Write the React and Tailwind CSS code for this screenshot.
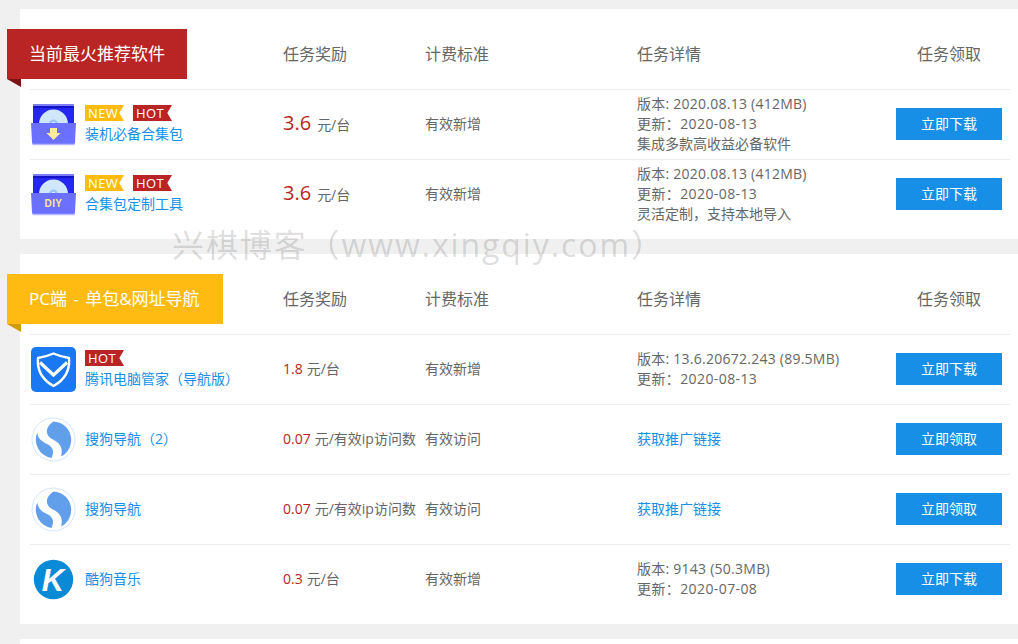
const FONT = "[font-family:'Open_Sans','Noto_Sans_CJK_SC',sans-serif]";

function BoxIcon({ diy }) {
  return (
    <svg width="45" height="45" viewBox="0 0 45 45" className="block">
      <rect x="2" y="2" width="41" height="26" rx="1.5" fill="#2626f2" />
      <rect x="2" y="2" width="41" height="2" fill="#7d7dfa" />
      <rect x="2" y="4" width="41" height="2" fill="#1212c8" />
      <circle cx="22.5" cy="22" r="14.5" fill="#cfe6fb" />
      <circle cx="22.5" cy="22" r="4.5" fill="#9cc8ef" />
      <circle cx="22.5" cy="22" r="2" fill="#e8f4fd" />
      <path d="M0 21H45L44 40Q44 43 41 43H4Q1 43 1 40Z" fill="#6c70ff" />
      <path d="M1.5 42.5H43.5" stroke="#b6b8ff" strokeWidth="1.5" />
      {diy ? (
        <text x="22.5" y="35" textAnchor="middle" fontSize="10" fontWeight="700" fill="#ffe98a" fontFamily="Liberation Sans, sans-serif" letterSpacing="0.4">DIY</text>
      ) : (
        <path d="M19 26H26V31H29.5L22.5 38L15.5 31H19Z" fill="#ffeb9c" />
      )}
    </svg>
  );
}

function ShieldIcon() {
  return (
    <svg width="45" height="45" viewBox="0 0 45 45" className="block">
      <rect width="45" height="45" rx="5" fill="#1a78f2" />
      <path d="M22.5 6.5C27 8.5 32 10 38 11C39 22 35 32 22.5 39C10 32 6 22 7 11C13 10 18 8.5 22.5 6.5Z" fill="none" stroke="#fff" strokeWidth="2.4" strokeLinejoin="round" />
      <path d="M9 15.5L22.5 28L36 15.5" fill="none" stroke="#fff" strokeWidth="3.2" strokeLinejoin="miter" />
    </svg>
  );
}

function SogouIcon() {
  return (
    <svg width="45" height="45" viewBox="0 0 45 45" className="block">
      <circle cx="22.5" cy="22.5" r="21.5" fill="#fff" stroke="#d5e6fa" strokeWidth="1" />
      <path d="M22.5 4.5A18.5 18.5 0 0 1 30 39.5C32.5 31 29 26 22 22.5C14 19 13.5 10 22.5 4.5Z" fill="#619fea" />
      <path d="M6.5 15A18.5 18.5 0 0 0 20.5 41C23.5 34 22 30 16 27C10 24.5 6 20 6.5 15Z" fill="#619fea" />
    </svg>
  );
}

function KugouIcon() {
  return (
    <svg width="45" height="45" viewBox="0 0 45 45" className="block">
      <circle cx="22.5" cy="22.5" r="19.7" fill="#0a8ad6" />
      <text x="22" y="33.5" textAnchor="middle" fontSize="31" fontWeight="700" fontStyle="italic" fill="#fff" fontFamily="Liberation Sans, sans-serif">K</text>
    </svg>
  );
}

function Tag({ children, color }) {
  return (
    <span className={`flex h-[16px] w-[39px] items-center pl-[3px] text-[13px] leading-[16px] tracking-[0.4px] text-white [clip-path:polygon(0_0,100%_0,88%_50%,100%_100%,0_100%)] ${color}`}>
      {children}
    </span>
  );
}

function Header({ title, flagColor, foldColor, flagWidth }) {
  return (
    <div className="flex h-[80px] items-center pt-[10px] text-[16px] leading-[22px] text-[#666666]">
      <div className="w-[253px]">
        <div className={`relative -ml-[23px] flex h-[50px] items-center whitespace-pre pl-[22px] text-[17px] text-white [word-spacing:2px] ${flagColor} ${flagWidth}`}>
          {title}
          <span className={`absolute left-0 top-full h-[8px] w-[14px] [clip-path:polygon(0_0,100%_0,100%_100%)] ${foldColor}`} />
        </div>
      </div>
      <div className="w-[142px]">任务奖励</div>
      <div className="w-[212px]">计费标准</div>
      <div className="w-[259px]">任务详情</div>
      <div className="w-[106px] text-center">任务领取</div>
    </div>
  );
}

function Row({ icon, tags, name, price, big, unit, standard, detail, link, button }) {
  return (
    <div className="flex h-[70px] items-center border-t border-[#eeeeee] pb-px text-[14px] leading-[20px] text-[#666666]">
      <div className="mt-px w-[55px] pl-[1px]">{icon}</div>
      <div className={tags ? "w-[198px] pt-px" : "w-[198px]"}>
        {tags && <div className="mb-[3px] flex gap-[9px]">{tags}</div>}
        <div className="text-[#178fe6]">{name}</div>
      </div>
      <div className="w-[142px] whitespace-nowrap">
        <span className={big ? "text-[20px] text-[#b92525]" : "text-[#b92525]"}>{price}</span>
        <span className={big ? "ml-[6px]" : "ml-[4px]"}>{unit}</span>
      </div>
      <div className="w-[212px]">{standard}</div>
      <div className="w-[259px]">
        {link ? <span className="text-[#178fe6]">{link}</span> : detail.map((d) => (
          <div key={d} className={d.startsWith("版本") ? "tracking-[0.25px]" : d.startsWith("更新") ? "tracking-[0.4px]" : ""}>{d}</div>
        ))}
      </div>
      <button className="h-[32px] w-[106px] bg-[#178fe6] text-white">{button}</button>
    </div>
  );
}

const newHot = [
  <Tag key="n" color="bg-[#ffbb12]">NEW</Tag>,
  <Tag key="h" color="bg-[#b92525]">HOT</Tag>,
];

export default function App() {
  return (
    <div className={`relative h-[644px] w-[1018px] overflow-hidden bg-[#f0f0f0] pt-[9px] ${FONT}`}>
      <section className="ml-[20px] mb-[15px] bg-white pb-[10px] pl-[10px] pr-[8px]">
        <Header title="当前最火推荐软件" flagColor="bg-[#b92525]" foldColor="bg-[#7a1414]" flagWidth="w-[180px]" />
        <Row icon={<BoxIcon />} tags={newHot} name="装机必备合集包" price="3.6" big unit="元/台" standard="有效新增"
          detail={["版本: 2020.08.13 (412MB)", "更新：2020-08-13", "集成多款高收益必备软件"]} button="立即下载" />
        <Row icon={<BoxIcon diy />} tags={newHot} name="合集包定制工具" price="3.6" big unit="元/台" standard="有效新增"
          detail={["版本: 2020.08.13 (412MB)", "更新：2020-08-13", "灵活定制，支持本地导入"]} button="立即下载" />
      </section>
      <section className="ml-[20px] mb-[15px] bg-white pb-[10px] pl-[10px] pr-[8px]">
        <Header title="PC端 - 单包&网址导航" flagColor="bg-[#ffbb12]" foldColor="bg-[#d19a10]" flagWidth="w-[216px]" />
        <Row icon={<ShieldIcon />} tags={[<Tag key="h" color="bg-[#b92525]">HOT</Tag>]} name="腾讯电脑管家（导航版）" price="1.8" unit="元/台" standard="有效新增"
          detail={["版本: 13.6.20672.243 (89.5MB)", "更新：2020-08-13"]} button="立即下载" />
        <Row icon={<SogouIcon />} name="搜狗导航（2）" price="0.07" unit="元/有效ip访问数" standard="有效访问" link="获取推广链接" button="立即领取" />
        <Row icon={<SogouIcon />} name="搜狗导航" price="0.07" unit="元/有效ip访问数" standard="有效访问" link="获取推广链接" button="立即领取" />
        <Row icon={<KugouIcon />} name="酷狗音乐" price="0.3" unit="元/台" standard="有效新增"
          detail={["版本: 9143 (50.3MB)", "更新：2020-07-08"]} button="立即下载" />
      </section>
      <section className="ml-[20px] h-[40px] bg-white" />
      <div className="absolute left-[172px] top-[221px] whitespace-nowrap text-[32px] leading-[48px] tracking-[1.9px] text-[#000000]/15">兴棋博客（www.xingqiy.com）</div>
    </div>
  );
}
